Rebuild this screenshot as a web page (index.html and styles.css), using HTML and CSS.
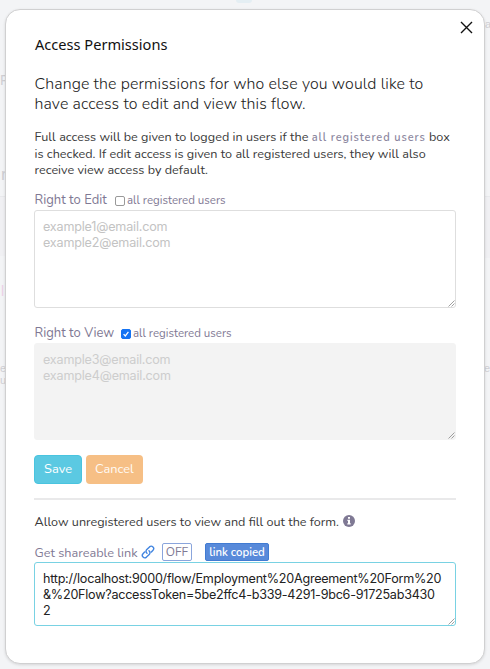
FILE: index.html
```html
<!DOCTYPE html>
<html lang="en">
<head>
<meta charset="utf-8">
<title>Access Permissions</title>
<link rel="stylesheet" href="styles.css">
</head>
<body>
<div class="backdrop" aria-hidden="true">
  <span class="ghost g1">F</span><span class="ghost g2">r</span><span class="ghost g3">l</span><span class="ghost g4">e</span><span class="ghost g5">u</span><span class="ghost g6">a</span><span class="ghost g7">e</span>
  <i class="band left"></i><i class="band right"></i><i class="blob"></i>
</div>
<main class="modal">
  <svg class="close" viewBox="0 0 13 13"><path d="M1 1l11 11M12 1L1 12"/></svg>
  <h1>Access Permissions</h1>
  <p class="lead">Change the permissions for who else you would like to<br>have access to edit and view this flow.</p>
  <p class="note">Full access will be given to logged in users if the <code>all registered users</code> box<br>is checked. If edit access is given to all registered users, they will also<br>receive view access by default.</p>
  <div class="label"><span class="name edit">Right to Edit</span><i class="check"></i><span class="all">all registered users</span></div>
  <div class="area"><span class="ph">example1@email.com<br>example2@email.com</span><svg class="grip" viewBox="0 0 7 7"><path d="M.5 6.5l6-6M3.5 6.5l3-3"/></svg></div>
  <div class="label second"><span class="name view">Right to View</span><i class="check on"><svg viewBox="0 0 9 9"><path d="M1.8 4.7l1.9 2L7.2 2"/></svg></i><span class="all">all registered users</span></div>
  <div class="area disabled"><span class="ph">example3@email.com<br>example4@email.com</span><svg class="grip" viewBox="0 0 7 7"><path d="M.5 6.5l6-6M3.5 6.5l3-3"/></svg></div>
  <div class="buttons"><button class="save">Save</button><button class="cancel">Cancel</button></div>
  <hr>
  <div class="allow"><span>Allow unregistered users to view and fill out the form.</span>
    <svg class="info" viewBox="0 0 12 12"><circle cx="6" cy="6" r="6"/><path d="M5 2h2v1.8H5zM4.4 4.8H7v3.4h.7v1.3H4.3V8.2H5V6h-.6z"/></svg>
  </div>
  <div class="share"><span class="get">Get shareable link</span>
    <svg class="link" viewBox="0 0 14 14"><path d="M6 8.2c-1.3-1.1-1.2-2.6-.2-3.6l2.7-2.7c2.4-2.1 5.6 1 3.5 3.4l-1.6 1.7M8 5.8c1.3 1.1 1.2 2.6.2 3.6l-2.7 2.7c-2.4 2.1-5.6-1-3.5-3.4l1.6-1.7"/></svg>
    <span class="off">OFF</span><span class="copied">link copied</span>
  </div>
  <div class="area url">http://localhost:9000/flow/Employment%20Agreement%20Form%20<br>&amp;%20Flow?accessToken=5be2ffc4-b339-4291-9bc6-91725ab3430<br>2<svg class="grip" viewBox="0 0 7 7"><path d="M.5 6.5l6-6M3.5 6.5l3-3"/></svg></div>
</main>
</body>
</html>
```
FILE: styles.css
```css
* { box-sizing: border-box; }
body {
  margin: 0; height: 669px; overflow: hidden; position: relative;
  background: #f3f4f6; color: #3a3a3a;
  font-family: Nunito, Lato, sans-serif; padding: 9px 5px 0;
}
.backdrop { position: absolute; inset: 0; }
.ghost { position: absolute; font: 14px/16px "Liberation Sans", sans-serif; color: #cfcfd3; }
.g1 { left: 0; top: 72px; }
.g2 { left: 1px; top: 167px; font-size: 17px; }
.g3 { left: 1px; top: 283px; color: #ecd0e6; }
.g4 { left: 0; top: 360px; font-size: 11px; }
.g5 { left: 0; top: 372px; font-size: 11px; }
.g6 { left: 485px; top: 16px; font-size: 11px; }
.g7 { left: 484px; top: 360px; font-size: 11px; }
.band { position: absolute; width: 6px; border-top: 1px solid #e8e9ec; background: #f0f0f3; }
.band.left { left: 0; top: 196px; height: 60px; }
.band.right { right: 0; top: 196px; height: 62px; }
.blob { position: absolute; left: 236px; top: 0; width: 16px; height: 3px; border-radius: 0 0 8px 8px; background: #e4eef3; }
.modal {
  position: relative; width: 480px; height: 655px; padding: 24px 28px 0;
  background: #fff; border: 1px solid #d0d0d1; border-radius: 15px;
  box-shadow: 0 1px 3px rgba(0,0,0,.12);
}
.close { position: absolute; left: 454px; top: 11px; width: 13px; height: 13px; fill: none; stroke: #111; stroke-width: 1.4; }
h1 { margin: 0; height: 20px; padding-left: 1px; font: 400 14.6px/20px "Noto Sans", sans-serif; color: #111; white-space: nowrap; }
p { margin: 0; white-space: nowrap; }
.lead { margin-top: 20px; height: 40px; font-size: 15.9px; line-height: 20px; font-weight: 350; letter-spacing: .11px; padding-left: .5px; color: #222; }
.note { margin-top: 15px; height: 48px; font-size: 12.6px; line-height: 16px; letter-spacing: .02px; padding-left: .5px; }
code { font: 600 11px/16px Nunito, Lato, sans-serif; letter-spacing: .9px; color: #8c87a0; }
.label { margin-top: 13px; height: 20px; display: flex; align-items: center; color: #7f7994; white-space: nowrap; }
.label.second { margin-top: 15px; }
.name { font-size: 13px; flex: none; padding-left: .5px; }
.edit { width: 81px; }
.view { width: 87px; }
.check { flex: none; width: 10px; height: 10px; border: 1px solid #999; border-radius: 2px; background: #fff; margin: 2px 2px 0 0; display: block; }
.check.on { background: #1473f3; border-color: #1473f3; }
.check svg { display: block; width: 8px; height: 8px; fill: none; stroke: #fff; stroke-width: 1.4; }
.all { font-size: 11.5px; }
.area { position: relative; width: 422px; height: 98px; border: 1px solid #dedede; border-radius: 3px; padding: 8px; font: 12.6px/16px Inter, sans-serif; letter-spacing: -.2px; white-space: nowrap; color: #222; }
.ph { color: #c3c3c3; }
.disabled { height: 97px; background: #f3f3f3; border-color: #f3f3f3; }
.disabled .ph { color: #cdcdcd; }
.grip { position: absolute; right: 0; bottom: 0; width: 7px; height: 7px; fill: none; stroke: #888; stroke-width: .8; }
.buttons { display: flex; gap: 4px; margin-top: 15px; }
button { height: 29px; border: 0; border-radius: 4px; padding: 0 0 1px; color: #fff; font: 12.8px Nunito, Lato, sans-serif; }
.save { width: 48px; background: #5bc9e2; border: 1px solid #49c4df; }
.cancel { width: 57px; background: #f6bf85; color: #fffaf4; }
hr { margin: 14px 0 0; border: 0; height: 2px; width: 422px; background: #e9e9ea; }
.allow { margin-top: 11px; height: 20px; display: flex; align-items: center; gap: 4px; font-size: 12.6px; white-space: nowrap; padding-left: .5px; }
.info { width: 12px; height: 12px; fill: #7f7994; }
.info path { fill: #fff; }
.share { margin-top: 11px; height: 20px; display: flex; align-items: center; color: #7f7994; white-space: nowrap; }
.get { font-size: 12.7px; width: 107px; padding-left: .5px; }
.link { width: 14px; height: 14px; fill: none; stroke: #4285e0; stroke-width: 1.4; stroke-linecap: round; }
.off { margin-left: 7px; width: 30px; height: 18px; border: 1px solid #8aa5dc; border-radius: 2px; text-align: center; font-size: 12px; line-height: 16px; }
.copied { margin-left: 13px; width: 64px; height: 18px; background: #588ada; border: 1px solid #417bd2; border-radius: 2px; color: #fff; text-align: center; font-size: 11.4px; font-weight: 600; line-height: 16px; }
.url { height: 64px; border-color: #79d2e3; letter-spacing: -.25px; }
```
